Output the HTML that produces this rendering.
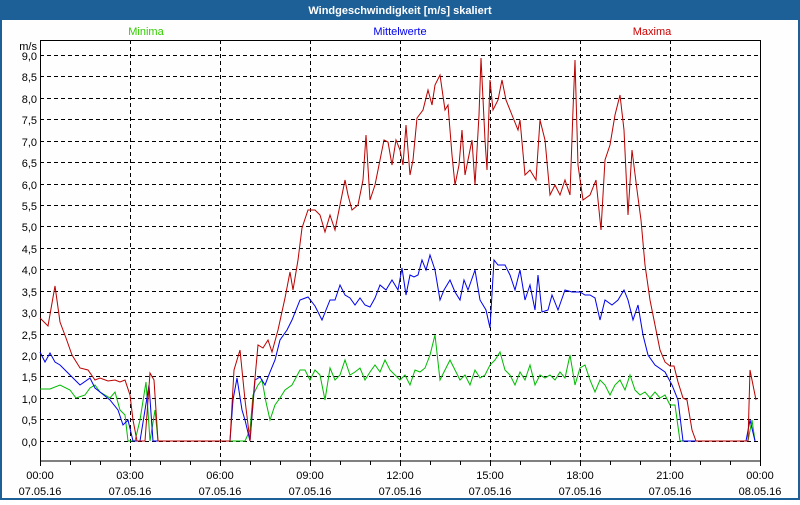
<!DOCTYPE html>
<html><head><style>
body{margin:0;width:800px;height:500px;overflow:hidden;background:#fff;font-family:"Liberation Sans",sans-serif}
</style></head><body>
<svg width="800" height="500" xmlns="http://www.w3.org/2000/svg" font-family="Liberation Sans, sans-serif" font-size="11">
<rect x="0" y="0" width="800" height="500" fill="#1d5f97"/>
<rect x="2" y="20" width="796" height="478" fill="#fdfefd"/>
<text x="400" y="14" fill="#fff" font-weight="bold" text-anchor="middle">Windgeschwindigkeit [m/s] skaliert</text>
<text x="146" y="35" fill="#33cc00" text-anchor="middle">Minima</text>
<text x="400" y="35" fill="#0000ee" text-anchor="middle">Mittelwerte</text>
<text x="652" y="35" fill="#cc0000" text-anchor="middle">Maxima</text>
<g stroke="#000" stroke-dasharray="4,3" stroke-width="1">
<path d="M40 55.5H760M40 76.5H760M40 98.5H760M40 119.5H760M40 141.5H760M40 162.5H760M40 184.5H760M40 205.5H760M40 226.5H760M40 248.5H760M40 269.5H760M40 291.5H760M40 312.5H760M40 334.5H760M40 355.5H760M40 376.5H760M40 398.5H760M40 419.5H760M40 441.5H760"/>
<path d="M130.5 40V461M220.5 40V461M310.5 40V461M400.5 40V461M490.5 40V461M580.5 40V461M670.5 40V461"/>
</g>
<rect x="40.5" y="40.5" width="720" height="420.5" fill="none" stroke="#000"/>
<g stroke="#000"><path d="M40.5 461v5M70.5 461v4M100.5 461v4M130.5 461v5M160.5 461v4M190.5 461v4M220.5 461v5M250.5 461v4M280.5 461v4M310.5 461v5M340.5 461v4M370.5 461v4M400.5 461v5M430.5 461v4M460.5 461v4M490.5 461v5M520.5 461v4M550.5 461v4M580.5 461v5M610.5 461v4M640.5 461v4M670.5 461v5M700.5 461v4M730.5 461v4M760.5 461v5"/></g>
<g text-anchor="end" fill="#000">
<text x="37" y="50">m/s</text>
<text x="37" y="60">9,0</text><text x="37" y="81">8,5</text><text x="37" y="103">8,0</text><text x="37" y="124">7,5</text><text x="37" y="146">7,0</text><text x="37" y="167">6,5</text><text x="37" y="189">6,0</text><text x="37" y="210">5,5</text><text x="37" y="231">5,0</text><text x="37" y="253">4,5</text><text x="37" y="274">4,0</text><text x="37" y="296">3,5</text><text x="37" y="317">3,0</text><text x="37" y="339">2,5</text><text x="37" y="360">2,0</text><text x="37" y="381">1,5</text><text x="37" y="403">1,0</text><text x="37" y="424">0,5</text><text x="37" y="446">0,0</text>
</g>
<g text-anchor="middle" fill="#000">
<text x="40" y="479">00:00</text><text x="40" y="495">07.05.16</text>
<text x="130" y="479">03:00</text><text x="130" y="495">07.05.16</text>
<text x="220" y="479">06:00</text><text x="220" y="495">07.05.16</text>
<text x="310" y="479">09:00</text><text x="310" y="495">07.05.16</text>
<text x="400" y="479">12:00</text><text x="400" y="495">07.05.16</text>
<text x="490" y="479">15:00</text><text x="490" y="495">07.05.16</text>
<text x="580" y="479">18:00</text><text x="580" y="495">07.05.16</text>
<text x="670" y="479">21:00</text><text x="670" y="495">07.05.16</text>
<text x="760" y="479">00:00</text><text x="760" y="495">08.05.16</text>
</g>
<g fill="none" stroke-width="1">
<polyline stroke="#00bb00" points="40,389 50,389 60,385 70,390 76,398 85,395 90,388 95,385 100,392 110,398 115,392 120,410 125,415 128,441 135,441 140,420 146,382 150,441 155,410 158,441 245,441 250,430 253,395 258,385 262,380 266,402 270,420 275,405 280,398 285,390 292,385 300,370 305,370 310,380 315,370 320,375 325,400 330,368 335,380 340,375 345,360 350,375 355,372 360,368 365,380 370,372 375,365 380,372 385,360 390,370 395,375 400,380 405,375 410,385 415,370 420,372 425,368 430,355 435,335 440,380 445,370 450,360 455,370 460,380 465,375 470,385 475,370 480,378 485,375 490,365 495,360 500,352 505,370 510,375 515,385 520,372 525,380 530,365 535,385 540,375 545,378 550,375 555,380 560,372 565,378 570,355 575,385 580,368 585,365 590,380 595,392 600,380 605,385 610,395 615,385 620,380 625,390 630,375 635,390 640,395 645,392 650,398 655,392 660,398 665,395 670,405 675,405 680,441 748,441 752,420 755,441"/>
<polyline stroke="#0000ee" points="40,352 45,362 50,353 55,362 60,365 70,375 80,385 90,378 95,388 100,392 110,400 118,410 123,425 128,420 133,441 140,441 145,410 149,385 153,441 160,441 230,441 233,400 237,378 242,410 245,420 250,441 255,380 260,377 265,385 270,372 275,360 280,340 287,330 292,320 300,300 308,297 315,306 322,320 330,300 335,300 340,285 345,295 350,298 355,305 360,298 365,305 370,307 375,298 380,285 386,290 392,280 398,290 402,268 406,295 410,275 414,277 418,275 422,260 426,270 430,255 435,270 440,300 444,290 450,280 455,292 460,300 464,280 468,290 475,270 480,300 486,310 490,328 494,260 498,265 505,265 510,275 515,290 520,270 525,300 530,285 535,310 538,275 542,312 548,310 552,295 558,310 565,290 572,292 580,292 585,295 590,295 595,298 600,320 605,300 612,305 618,300 624,290 628,300 633,320 638,305 643,335 648,355 655,365 665,372 672,385 678,400 683,441 690,441 746,441 750,420 755,441"/>
<polyline stroke="#bb0000" points="40,318 48,326 55,286 60,322 66,338 72,355 80,368 88,370 95,380 100,378 108,381 115,380 120,382 125,380 130,395 133,420 137,441 145,441 150,373 154,380 158,441 230,441 234,370 240,350 245,400 250,441 253,400 258,345 263,348 268,340 272,352 278,330 285,298 290,272 293,290 298,260 302,228 308,210 315,210 320,215 325,232 330,215 335,230 340,205 345,180 348,195 352,210 358,205 363,180 366,135 370,200 375,185 380,160 384,140 388,142 392,165 396,140 400,150 403,165 406,125 410,175 413,160 417,118 423,110 428,90 432,105 435,85 440,75 445,110 448,105 452,155 455,185 459,165 462,130 465,175 468,160 472,140 475,185 479,115 481,58 485,140 487,170 490,80 493,110 498,100 502,80 506,100 512,115 518,130 520,120 525,175 530,170 536,180 540,120 545,140 550,195 555,185 560,195 565,180 570,195 573,110 575,60 578,165 583,200 590,195 596,180 601,230 605,160 610,145 615,115 620,95 624,130 628,215 632,150 637,190 641,220 645,265 650,300 655,325 660,350 665,362 670,366 674,366 678,382 683,398 687,400 692,430 696,441 748,441 750,370 753,385 756,400"/>
</g>
</svg>
</body></html>
